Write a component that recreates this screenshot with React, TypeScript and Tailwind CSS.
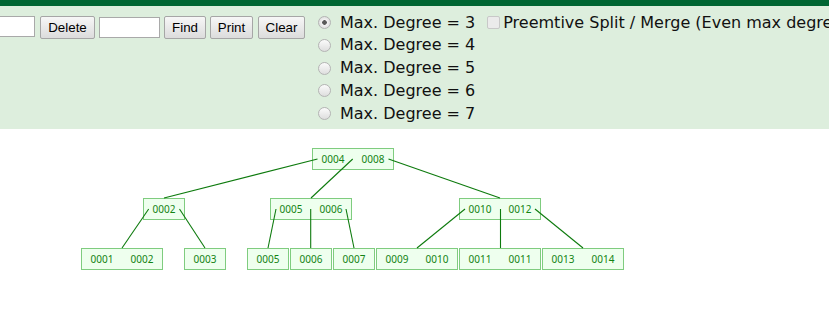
import React from "react";

type Node = { keys: string[]; cls: string };

const nodes: Node[] = [
  { keys: ["0004", "0008"], cls: "left-[312px] top-[19px] w-[82px]" },
  { keys: ["0002"], cls: "left-[143px] top-[69px] w-[42px]" },
  { keys: ["0005", "0006"], cls: "left-[270px] top-[69px] w-[82px]" },
  { keys: ["0010", "0012"], cls: "left-[459px] top-[69px] w-[82px]" },
  { keys: ["0001", "0002"], cls: "left-[81px] top-[119px] w-[82px]" },
  { keys: ["0003"], cls: "left-[184px] top-[119px] w-[42px]" },
  { keys: ["0005"], cls: "left-[247px] top-[119px] w-[42px]" },
  { keys: ["0006"], cls: "left-[290px] top-[119px] w-[42px]" },
  { keys: ["0007"], cls: "left-[333px] top-[119px] w-[42px]" },
  { keys: ["0009", "0010"], cls: "left-[376px] top-[119px] w-[82px]" },
  { keys: ["0011", "0011"], cls: "left-[459px] top-[119px] w-[82px]" },
  { keys: ["0013", "0014"], cls: "left-[542px] top-[119px] w-[82px]" },
];

const lines: [number, number, number, number][] = [
  [317.5, 30, 164, 69],
  [352.7, 30, 311, 69],
  [388.5, 30, 500, 69],
  [148.7, 80, 122, 119],
  [179.5, 80, 205, 119],
  [276, 80, 268, 119],
  [310.7, 80, 310.7, 119],
  [346, 80, 354, 119],
  [465, 80, 417, 119],
  [500.5, 80, 500.5, 119],
  [535, 80, 583, 119],
];

function Btn({ label, cls }: { label: string; cls: string }) {
  return (
    <button
      className={`h-[23px] ${cls} rounded-[2px] border border-[#a6a6a6] bg-gradient-to-b from-[#f7f7f7] to-[#dcdcdc] font-['Liberation_Sans',Arial,sans-serif] text-[13.33px] text-black leading-none`}
    >
      {label}
    </button>
  );
}

function TextBox({ cls }: { cls: string }) {
  return (
    <input
      type="text"
      className={`h-[21px] ${cls} border border-[#a9a9a9] bg-white px-[2px] text-[13.33px] outline-none`}
    />
  );
}

export default function App() {
  const degrees = [3, 4, 5, 6, 7];
  return (
    <div className="w-[829px] h-[317px] overflow-hidden bg-white">
      <div className="h-[6px] bg-[#006633]" />
      <div className="h-[123px] bg-[#ddeedd] flex items-start whitespace-nowrap">
        <div className="ml-[-26px] pt-[8px] flex items-center">
          <TextBox cls="w-[61px]" />
          <div className="ml-[5px]">
            <Btn label="Delete" cls="w-[55px]" />
          </div>
          <div className="ml-[4px]">
            <TextBox cls="w-[61px]" />
          </div>
          <div className="ml-[4px]">
            <Btn label="Find" cls="w-[42px]" />
          </div>
          <div className="ml-[4px]">
            <Btn label="Print" cls="w-[43px]" />
          </div>
          <div className="ml-[5px]">
            <Btn label="Clear" cls="w-[47px]" />
          </div>
        </div>
        <div className="ml-[13px] pt-[5.33px] flex flex-col">
          {degrees.map((d) => (
            <label
              key={d}
              className="h-[22.75px] flex items-center font-['DejaVu_Sans',Verdana,sans-serif] text-[16px] text-[#111]"
            >
              <input
                type="radio"
                name="deg"
                defaultChecked={d === 3}
                className="m-0 w-[13px] h-[13px] appearance-none rounded-full border border-[#b4b4b4] bg-[linear-gradient(#fbfbfb,#dedede)] checked:bg-[radial-gradient(circle,#5a5a5a_0,#5a5a5a_2px,#f2f2f2_2.6px,#dedede_6px)]"
              />
              <span className="ml-[9px]">Max. Degree = {d}</span>
            </label>
          ))}
        </div>
        <div className="ml-[12px] pt-[5.33px]">
          <label className="h-[22.75px] flex items-center font-['DejaVu_Sans',Verdana,sans-serif] text-[16px] text-[#111]">
            <input
              type="checkbox"
              disabled
              className="m-0 w-[13px] h-[13px] appearance-none rounded-[2px] border border-[#c8c8c8] bg-[#ebebeb]"
            />
            <span className="ml-[3px]">Preemtive Split / Merge (Even max degree only)</span>
          </label>
        </div>
      </div>
      <div className="relative h-[188px]">
        {nodes.map((n, i) => (
          <div
            key={i}
            className={`absolute ${n.cls} h-[22px] flex border border-[#7fcc7f] bg-[#eeffee]`}
          >
            {n.keys.map((k, j) => (
              <div
                key={j}
                className="flex-1 flex items-center justify-center font-['Noto_Sans',sans-serif] text-[10px] text-[#138313]"
              >
                {k}
              </div>
            ))}
          </div>
        ))}
        <svg className="absolute inset-0 pointer-events-none" width="829" height="188">
          {lines.map(([x1, y1, x2, y2], i) => (
            <line key={i} x1={x1} y1={y1} x2={x2} y2={y2} stroke="#0d7a0d" strokeWidth="1.1" />
          ))}
        </svg>
      </div>
    </div>
  );
}
